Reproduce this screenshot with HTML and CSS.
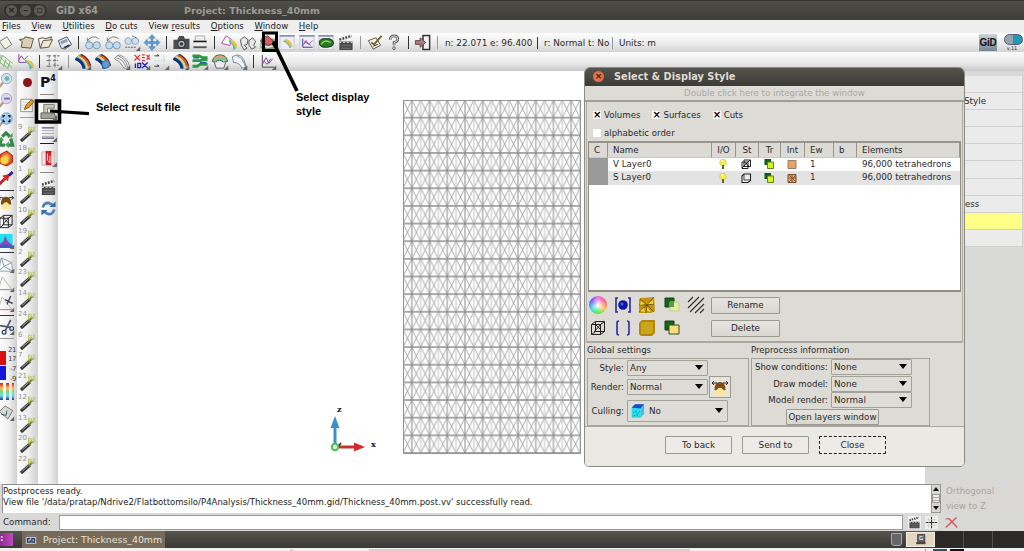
FILE: index.html
```html
<!DOCTYPE html>
<html lang="en">
<head>
<meta charset="utf-8">
<title>GiD x64 - Project: Thickness_40mm</title>
<link rel="stylesheet" href="styles.css">
</head>
<body>
<svg class="defs" width="0" height="0">
  <defs>
    <linearGradient id="rain" x1="0" y1="1" x2="1" y2="0"><stop offset="0" stop-color="#22a"/><stop offset=".4" stop-color="#3bc"/><stop offset=".6" stop-color="#fc3"/><stop offset="1" stop-color="#c22"/></linearGradient>
    <radialGradient id="ball"><stop offset="0" stop-color="#fe6"/><stop offset="1" stop-color="#c31"/></radialGradient>
  </defs>
  <symbol id="corner" viewBox="0 0 18 18"><path d="M18 13v5h-5z" fill="#666"/></symbol>
  <symbol id="new" viewBox="0 0 18 18"><path d="M2 8l8-5 5 8-7 5z" fill="#f3f3ea" stroke="#777766"/></symbol>
  <symbol id="open" viewBox="0 0 18 18"><path d="M2 6l5-1 1-2 9 2-3 10-10-1 1-6z" fill="#d8d0b4" stroke="#56503c"/></symbol>
  <symbol id="open2" viewBox="0 0 18 18"><path d="M2 5l5-1 2 1 7-2-1 3M4 15L2 5m2 10l3-8 10-1-4 8z" fill="#efe8d0" stroke="#56503c"/></symbol>
  <symbol id="save" viewBox="0 0 18 18"><path d="M2 7l9-4 5 8-7 5-4-1z" fill="#e8ecf0" stroke="#4c5158"/><path d="M4 8l7-3 1 3-7 3z" fill="#88a0b8"/><path d="M7 14l6-3 2 1-6 3z" fill="#333"/></symbol>
  <symbol id="glass" viewBox="0 0 18 18"><path d="M3 7q6-7 12-2" fill="none" stroke="#777"/><path d="M3 4v3.500h3" fill="none" stroke="#777"/><circle cx="5" cy="12" r="3.800" fill="#c3dbee" stroke="#7a98b5"/><circle cx="13" cy="12" r="3.800" fill="#c3dbee" stroke="#7a98b5"/></symbol>
  <symbol id="glass3" viewBox="0 0 18 18"><circle cx="5" cy="7.500" r="3.600" fill="#cfe1ee" stroke="#8aa6bc"/><circle cx="12.500" cy="7.500" r="3.600" fill="#cfe1ee" stroke="#8aa6bc"/><path d="M2 14h12M9 2l5 2" stroke="#555" stroke-dasharray="2 1"/><use href="#corner"/></symbol>
  <symbol id="move" viewBox="0 0 18 18"><path d="M9 .5l3.500 4H10V8h4V5.500L17.500 9 14 12.500V10h-4v3.500h2.500L9 17.500l-3.500-4H8V10H4v2.500L.5 9 4 5.500V8h4V4.500H5.500z" fill="#5d9bd2" stroke="#3c78b4" stroke-width=".5"/></symbol>
  <symbol id="camera" viewBox="0 0 18 18"><path d="M1 6h4l2-4h5l1 3h5v11H1z" fill="#4a4c4f"/><circle cx="9.500" cy="10.500" r="4" fill="#aab4bd" stroke="#222"/><circle cx="9.500" cy="10.500" r="1.800" fill="#334"/></symbol>
  <symbol id="print" viewBox="0 0 18 18"><path d="M4 7V2h10v5" fill="#eee" stroke="#aaa"/><path d="M2 8h14" stroke="#222" stroke-width="2"/><path d="M3 9h12v3H3z" fill="#eee"/><path d="M2 14h14" stroke="#555" stroke-width="2"/></symbol>
  <symbol id="band" viewBox="0 0 18 18"><path d="M1 6Q4 1 8 1q8 5 9 12-2 4-7 4Q8 9 1 6z" fill="#54b8cc"/><path d="M1 6Q9 9 10 16.500" fill="none" stroke="#12307f" stroke-width="3"/><path d="M4 3.500Q12 7 13.500 16" fill="none" stroke="#e8d86c" stroke-width="2"/><path d="M5.500 2.500Q14 6 15.500 14.500" fill="none" stroke="#e35d22" stroke-width="1.800"/><path d="M7 1.500q8 4 10 12" fill="none" stroke="#812020" stroke-width="1.400"/></symbol>
  <symbol id="select" viewBox="0 0 18 18"><path d="M1 10l5-8 6 4-2 6z" fill="#fff" stroke="#b4a"/><path d="M9 5q8 2 9 9l-4 3Q13 9 9 9z" fill="url(#rain)"/></symbol>
  <symbol id="shoes" viewBox="0 0 18 18"><path d="M1 6l4-3 4 3-1 5-3 1 3 3-3 2-3-5zM10 7l4-3 3 4-2 4 2 2-4 2-3-4z" fill="#e9e9e9" stroke="#555"/></symbol>
  <symbol id="layers" viewBox="0 0 18 18"><path d="M1 10l5-6 10 1 1 10-8 2-8-2z" fill="#72a078"/><path d="M1 8q1-5 8-6l7 7-6 3z" fill="#d9615d" stroke="#833"/><path d="M2 12l7 2 7-2" fill="none" stroke="#eee" stroke-width="1.500"/></symbol>
  <symbol id="window" viewBox="0 0 18 18"><path d="M1.500 1.500h15v15h-15z" fill="#eceef4" stroke="#c3c7d4"/><path d="M1 1h16v2H1z" fill="#8793b4"/></symbol>
  <symbol id="winband" viewBox="0 0 18 18"><use href="#window"/><path d="M5 8l3-3q6 3 7 8l-3 2q-2-5-7-7z" fill="url(#rain)"/></symbol>
  <symbol id="wingraph" viewBox="0 0 18 18"><use href="#window"/><path d="M4.500 5v9H15" fill="none" stroke="#338"/><path d="M5 12l3-5 3 4 4-4M6 8l7 4" fill="none" stroke="#a4a"/></symbol>
  <symbol id="wineye" viewBox="0 0 18 18"><use href="#window"/><path d="M2 9q0-4 5-4h6q4 1 4 5-1 4-6 4H7q-5 0-5-5z" fill="#2c7a20" stroke="#132"/><path d="M4 11q3-6 10-2" fill="none" stroke="#9d5" stroke-width="1.500"/></symbol>
  <symbol id="clap" viewBox="0 0 18 18"><path d="M2 8h14v9H2z" fill="#4a4a4c"/><path d="M2 6l13-4" stroke="#444" stroke-width="2.600" stroke-dasharray="2 1.300"/><path d="M2 9h14" stroke="#ddd" stroke-dasharray="2 2"/><path d="M4 12h10M4 15h10" stroke="#777"/></symbol>
  <symbol id="note" viewBox="0 0 18 18"><path d="M2 7l8-3 5 8-8 4z" fill="#f4f1e5" stroke="#555"/><path d="M5 9l3 2 8-9" fill="none" stroke="#763" stroke-width="2"/><path d="M7 13l5-2" stroke="#333"/></symbol>
  <symbol id="help" viewBox="0 0 18 18"><path d="M5 6q0-4 4-4t4 3.500Q13 8 9 9v3" fill="none" stroke="#555" stroke-width="2.800"/><path d="M5 6q0-4 4-4t4 3.500Q13 8 9 9v3" fill="none" stroke="#eee"/><circle cx="9" cy="15" r="1.400" fill="#eee" stroke="#555"/></symbol>
  <symbol id="exit" viewBox="0 0 18 18"><path d="M9 1.500h7v15H9z" fill="#f5f5f5" stroke="#333" stroke-width="1.600"/><path d="M1 7h5V4l6 5-6 5v-3H1z" fill="#a97f7f" stroke="#644"/></symbol>
  <symbol id="mesh" viewBox="0 0 18 18"><path d="M1 3l14 12M1 9l10 7M1 15L5 3M6 15l3-8M11 16l2-6M1 3h5l10 8" fill="none" stroke="#7db56a"/></symbol>
  <symbol id="graphband" viewBox="0 0 18 18"><path d="M1.500 1v9H12M1 8l3-5 3 4 4-4" fill="none" stroke="#84a"/><path d="M8 7q8 0 10 8l-5 2q0-6-5-7z" fill="url(#rain)"/></symbol>
  <symbol id="ranges" viewBox="0 0 18 18"><path d="M4 2v13M10 2v13M1 3h5M1 8h5M1 14h5M8 3h7M8 8h5M8 13h6" stroke="#666" stroke-dasharray="3 1"/><use href="#corner"/></symbol>
  <symbol id="bandc" viewBox="0 0 18 18"><use href="#band"/><use href="#corner"/></symbol>
  <symbol id="bandb" viewBox="0 0 18 18"><use href="#band"/><circle cx="12" cy="12" r="4" fill="#5b9dd0" stroke="#37a"/></symbol>
  <symbol id="lines" viewBox="0 0 18 18"><path d="M1 6Q3 2 7 2q8 4 10 12-3 3-6 2Q8 9 1 6zM3 5q8 2 10 10M5 3q8 3 10 12" fill="#f2f2f2" stroke="#888"/><use href="#corner"/></symbol>
  <symbol id="minmax" viewBox="0 0 18 18"><path d="M1 2l6 6M7 2L1 8M9 2h3M9 5h3M9 8h3M14 2l3 5M17 2l-3 5" stroke="#d33" stroke-width="1.300"/><path d="M9 10l6 6M15 10l-6 6M2 11v5M4.500 11h3v4.500h-3z" fill="none" stroke="#22b" stroke-width="1.400"/><use href="#corner"/></symbol>
  <symbol id="vectors" viewBox="0 0 18 18"><path d="M2 3h5l-2-1.500M2 14h5l-2-1.500" fill="none" stroke="#333"/><path d="M12 3v12M3 8h12" stroke="#9cb" stroke-dasharray="1 2"/><use href="#corner"/></symbol>
  <symbol id="stream" viewBox="0 0 18 18"><path d="M1 3h7l4 2h5M1 8h8l3-1h5M1 14h5l3-2h8" fill="none" stroke="#2b9a42" stroke-width="3"/><path d="M2 5h6M9 10h7" stroke="#26a" stroke-width="1.500"/><use href="#corner"/></symbol>
  <symbol id="arch" viewBox="0 0 18 18"><path d="M1 9q1-7 8-7t8 7l-4 1q-5-5-9 0z" fill="#80c99a" stroke="#354"/><path d="M3 10l2 6h8l2-6" fill="#e8eef0" stroke="#656"/><path d="M3 6q6-5 12 0" fill="none" stroke="#e96" stroke-width="1.500"/><use href="#corner"/></symbol>
  <symbol id="shell" viewBox="0 0 18 18"><path d="M2 4q8-5 12 3l3 8-5 1q-2-6-9-6zM7 3q6 2 9 12" fill="#edf5fa" stroke="#789"/><use href="#corner"/></symbol>
  <symbol id="graph" viewBox="0 0 18 18"><path d="M3 2v13h13" fill="none" stroke="#444"/><path d="M3 12l4-7 3 6 4-5M4 8l4 4 4-6" fill="none" stroke="#84a"/><use href="#corner"/></symbol>
  <symbol id="zoomi" viewBox="0 0 18 18"><path d="M1 17l5-6" stroke="#b98" stroke-width="2.500"/><circle cx="9.500" cy="7" r="5.500" fill="#cfe3ee" stroke="#8cabc0"/><circle cx="10" cy="7" r="2.500" fill="#6fb4aa"/></symbol>
  <symbol id="zoomv" viewBox="0 0 18 18"><path d="M1 17l5-6" stroke="#b98" stroke-width="2.500"/><circle cx="9.500" cy="7" r="5.500" fill="#dcd9ee" stroke="#a3a0c0"/><path d="M7 7h6" stroke="#86a" stroke-width="2"/></symbol>
  <symbol id="zoomf" viewBox="0 0 18 18"><path d="M1 17l5-6" stroke="#b98" stroke-width="2.500"/><circle cx="9.500" cy="8" r="6" fill="#a9d2ee" stroke="#6f9cc0"/><path d="M6 7V5h2M11 5h2v2M13 9v2h-2M8 11H6V9" fill="none" stroke="#136" stroke-width="1.600"/></symbol>
  <symbol id="recycle" viewBox="0 0 18 18"><path d="M5 6l4-4 4 4M14 8l2 7h-5M8 15H2l2-6" fill="none" stroke="#328747" stroke-width="3.400"/><path d="M11 7h5V2zM12 11v7l-4-3.500zM1 10h6L4 6z" fill="#4b9d5c"/></symbol>
  <symbol id="sphere" viewBox="0 0 18 18"><path d="M2 5l8-4 6 5v7l-6 4-8-3z" fill="url(#ball)" stroke="#b21"/><circle cx="7" cy="11" r="4" fill="#f5d645"/></symbol>
  <symbol id="arrow" viewBox="0 0 18 18"><path d="M1 16l7-7" stroke="#b22" stroke-width="3"/><path d="M5 6l8-2-2 8z" fill="#d22"/><path d="M12 6l4-4" stroke="#228" stroke-width="3"/></symbol>
  <symbol id="lamp" viewBox="0 0 18 18"><path d="M6 10h6l3 7H3z" fill="#ffe7a0"/><path d="M3.500 12q0-8 5.500-8t5.500 8q-1.500 1-3-1-2.500-2.500-5 0-1.500 2-3 1z" fill="#824c0c"/><path d="M1 5h5M1 5l2-2M1 5l2 2M17 5h-5M17 5l-2-2M17 5l-2 2" stroke="#222" fill="none"/></symbol>
  <symbol id="cubex" viewBox="0 0 18 18"><path d="M2.500 5.500h9v10h-9zM6.500 2.500h9v10h-9zM2.500 5.500l4-3M11.500 5.500l4-3M2.500 15.500l4-3M11.500 15.500l4-3M5 13l8-9M6 5l6 6" fill="none" stroke="#222"/></symbol>
  <symbol id="cull" viewBox="0 0 18 18"><path d="M2 5l4-4h11l-4 5v11H2z" fill="#25dff0"/><path d="M2 5l4-4h11l-4 5z" fill="#2549cc"/><path d="M13 6l4-5v11l-4 5z" fill="#53b9d8"/><path d="M4 11l3-2 2 4 3-4M3 15l5-1 3 2" stroke="#17716e" fill="none" stroke-dasharray="1 1"/></symbol>
  <symbol id="cullm" viewBox="0 0 18 18"><path d="M1 2h15v14H1z" fill="#24e0ee"/><path d="M1 14l5-4 2-6 3 6 5 4v3H1z" fill="#8a4bb8"/><path d="M1 15l7-2 8 2v2H1z" fill="#2d61c8"/><use href="#corner"/></symbol>
  <symbol id="tetra" viewBox="0 0 18 18"><path d="M4 2l11 5 1 9H1zM4 2l3 9 9 5M15 7l-8 4-6 5" fill="#f5f7fa" stroke="#8b9bb5"/><use href="#corner"/></symbol>
  <symbol id="tri" viewBox="0 0 18 18"><path d="M5 2l10 13M5 2L1 15" fill="none" stroke="#bba"/><path d="M1 15.500h14" stroke="#c66"/><use href="#corner"/></symbol>
  <symbol id="tricut" viewBox="0 0 18 18"><use href="#tri"/><path d="M8 5l8 4M14 1l-4 9" stroke="#446" stroke-width="1.500"/></symbol>
  <symbol id="scissors" viewBox="0 0 18 18"><path d="M2 8l12 2M14 2L8 14" stroke="#556" stroke-width="1.800"/><circle cx="15" cy="11" r="2" fill="none" stroke="#246" stroke-width="1.300"/><circle cx="7" cy="15" r="2" fill="none" stroke="#246" stroke-width="1.300"/><use href="#corner"/></symbol>
  <symbol id="tag" viewBox="0 0 18 18"><path d="M2 8l6-6 8 5-5 9z" fill="#d5d9cf" stroke="#777"/><path d="M4 11l5 1 1-5" fill="none" stroke="#356"/><use href="#corner"/></symbol>
  <symbol id="wand" viewBox="0 0 18 18"><path d="M1.500 17L11 8.500" stroke="#383838" stroke-width="3.400"/><path d="M3 15l7-6.500" stroke="#aaa"/><path d="M9.500 9.500l4-4" stroke="#6d7733" stroke-width="2.500"/><path d="M9 3h7.500M9 6h8M10 1.500v7M15.500 1.500v6" stroke="#c3c862" stroke-width="1.800" stroke-dasharray="1.500 1"/></symbol>
  <symbol id="pencil" viewBox="0 0 18 18"><path d="M2 2.500h13v14H2z" fill="#f7f6ee" stroke="#888"/><path d="M4 6h9M4 9h9M4 12h9" stroke="#ccc"/><path d="M6 14l2-5 6-6 3 2-6 7z" fill="#e2952b" stroke="#8a5317"/></symbol>
  <symbol id="folder" viewBox="0 0 18 18"><path d="M4 1.500h11v4H8v6H4z" fill="#c6cabb" stroke="#74786a"/><path d="M1 10.500h14l2 6H1z" fill="#9fa595" stroke="#5d6155"/><use href="#corner"/></symbol>
  <symbol id="sheet" viewBox="0 0 18 18"><path d="M2 3h13M2 14h13" stroke="#557" stroke-width="1.300"/><path d="M2 6h13M2 9h13M2 12h13" stroke="#a5a8b5"/><use href="#corner"/></symbol>
  <symbol id="spiral" viewBox="0 0 18 18"><path d="M2 2h13v14H2z" fill="#f0e2e2" stroke="#c9b0b0"/><path d="M6 1h6v15H6z" fill="#cc2229"/><path d="M8 4v7l2.500 2.500V6" stroke="#fff" fill="none"/><use href="#corner"/></symbol>
  <symbol id="refresh" viewBox="0 0 18 18"><path d="M3 8q1-5 6-5l4 2M15 10q-1 5-6 5l-4-2" fill="none" stroke="#4a80b4" stroke-width="2.800"/><path d="M10 7.500h6.500V1.500zM8 10.500H1.500v6z" fill="#356a9f"/></symbol>
  <symbol id="bulb" viewBox="0 0 12 12"><circle cx="6" cy="4.500" r="3.300" fill="#f3ef4f" stroke="#c3bd50" stroke-width=".6"/><path d="M5 7h2v4H5z" fill="#676127"/><path d="M4 3h2" stroke="#fff"/></symbol>
  <symbol id="boxx" viewBox="0 0 12 12"><path d="M2 4h6v6.500H2zM4 2h6.500v6.500H4zM2 10l8-8M4 4l5 4" fill="none" stroke="#222"/></symbol>
  <symbol id="box" viewBox="0 0 12 12"><path d="M4 2h6.500v6.500L8 10.500H2V4z" fill="#eee" stroke="#222" stroke-width="1.100"/><path d="M4 2.500V8h6" fill="none" stroke="#444"/></symbol>
  <symbol id="trans" viewBox="0 0 12 12"><path d="M1.500 1H8v6H1.500z" fill="#0c5c16"/><path d="M4.500 4h6v6.500h-6z" fill="#dced2e" stroke="#5a8a14"/></symbol>
  <symbol id="swatch" viewBox="0 0 12 12"><path d="M2 2.500h8V10.500H2z" fill="#e5a468" stroke="#9d7f60"/></symbol>
  <symbol id="swatchx" viewBox="0 0 12 12"><path d="M2 2.500h8V10.500H2z" fill="#e5a468" stroke="#7a4e2c"/><path d="M3 6h7M6 3v7M3 3l7 7M10 3l-7 7" stroke="#7a4e2c" stroke-width=".8"/></symbol>
  <symbol id="dot" viewBox="0 0 18 18"><path d="M4 2H2v14h2M14 2h2v14h-2" fill="none" stroke="#2427a8" stroke-width="1.600"/><circle cx="9" cy="9" r="4.800" fill="#1215a5"/><circle cx="8" cy="8" r="1.500" fill="#4468d4"/></symbol>
  <symbol id="brackets" viewBox="0 0 18 18"><path d="M5 2q-2 0-2 2v10q0 2 2 2M13 2q2 0 2 2v10q0 2-2 2" fill="none" stroke="#2b2ba8" stroke-width="1.600"/></symbol>
  <symbol id="facets" viewBox="0 0 18 18"><path d="M2 2l14-1 1 14-4 2H1V4z" fill="#c29510"/><path d="M2 3l7 6 7-8M1 16l8-7 7 7M1 9h8M9 9l7-1M9 9l-1 8" stroke="#5e4505" stroke-width=".7" fill="none"/><path d="M10 8l5-4v4zM3 5l4 3-5 1zM9 11l4 5-4-1zM2 15l4-3 1 4z" fill="#f4cf37"/></symbol>
  <symbol id="smooth" viewBox="0 0 18 18"><path d="M4 1h13v13l-3 3H3l-2-2V4z" fill="#b0860c"/><path d="M4 3h11v10l-2 2H3V5z" fill="#cda51b"/></symbol>
  <symbol id="transp" viewBox="0 0 18 18"><path d="M2 2h9v9H2z" fill="#18631c" stroke="#123f12"/><path d="M7 6h9v9H7z" fill="#e8eca2" stroke="#bfcf8f"/><path d="M7 6h4v5H7z" fill="#5b9b4c"/></symbol>
  <symbol id="opaque" viewBox="0 0 18 18"><path d="M2 2h9v9H2z" fill="#18631c" stroke="#123f12"/><path d="M6 6h10v9H6z" fill="#f4df7a" stroke="#3d4c17"/></symbol>
  <symbol id="hatch" viewBox="0 0 18 18"><path d="M1 6l5-5M1 12L12 1M3 16L17 2M8 17l9-9M13 17l4-4" stroke="#333" stroke-width="1.200"/></symbol>
</svg>

<div class="screen">
  <header class="titlebar">
    <div class="winbtns"><i>×</i><i>–</i><i>▫</i></div>
    <span class="app">GiD x64</span>
    <span class="proj">Project: Thickness_40mm</span>
  </header>
  <nav class="menu">
    <span><u>F</u>iles</span><span><u>V</u>iew</span><span><u>U</u>tilities</span><span><u>D</u>o cuts</span><span>View <u>r</u>esults</span><span><u>O</u>ptions</span><span><u>W</u>indow</span><span><u>H</u>elp</span>
  </nav>
  <div class="toolbar first">
    <svg><use href="#new"/></svg><svg><use href="#open"/></svg><svg><use href="#open2"/></svg><svg><use href="#save"/></svg><b class="sep"></b>
    <svg><use href="#glass"/></svg><svg><use href="#glass"/></svg><svg><use href="#glass3"/></svg><svg><use href="#move"/></svg><b class="sep"></b>
    <svg><use href="#camera"/></svg><svg><use href="#print"/></svg><b class="sep"></b>
    <svg><use href="#select"/></svg><svg><use href="#shoes"/></svg><svg><use href="#layers"/></svg><svg><use href="#winband"/></svg><svg><use href="#wingraph"/></svg><svg><use href="#wineye"/></svg><svg><use href="#clap"/></svg><b class="sep grey"></b>
    <svg><use href="#note"/></svg><svg><use href="#help"/></svg><b class="sep"></b><svg><use href="#exit"/></svg><b class="sep grey"></b>
    <span class="stat s1">n: 22.071 e: 96.400</span><span class="stat s2">r: Normal t: No</span><span class="stat s3">Units: m</span>
    <span class="gid">GiD</span>
    <span class="ver"><i></i>v.11</span>
  </div>
  <div class="toolbar second">
    <svg><use href="#mesh"/></svg><svg><use href="#graphband"/></svg><b class="sep"></b><svg><use href="#ranges"/></svg><b class="sep grey"></b>
    <svg><use href="#bandc"/></svg><svg><use href="#bandb"/></svg><svg><use href="#lines"/></svg><svg><use href="#minmax"/></svg><svg><use href="#vectors"/></svg><svg><use href="#bandc"/></svg><svg><use href="#stream"/></svg><svg><use href="#arch"/></svg><svg><use href="#shell"/></svg><b class="sep"></b><svg><use href="#graph"/></svg>
  </div>

  <main class="work">
    <div class="col cola">
      <svg><use href="#zoomi"/></svg><svg><use href="#zoomv"/></svg><svg><use href="#zoomf"/></svg><svg><use href="#recycle"/></svg><svg><use href="#sphere"/></svg><svg><use href="#arrow"/></svg><b class="rule"></b>
      <svg><use href="#lamp"/></svg><svg><use href="#cubex"/></svg><svg><use href="#cullm"/></svg><b class="rule"></b>
      <svg><use href="#tetra"/></svg><svg><use href="#tri"/></svg><svg><use href="#tricut"/></svg><b class="rule"></b>
      <svg><use href="#scissors"/></svg><b class="rule grey"></b>
      <div class="legend"><div class="chips"><i class="red"></i><i class="blue"></i></div><div class="nums"><span>21</span><span>17</span><span>-7</span><span>-9</span></div></div>
      <div class="strips"><i></i><i></i><i></i></div>
      <svg class="tagicon"><use href="#tag"/></svg>
    </div>
    <div class="col colb">
      <i class="rec"></i><svg class="pen"><use href="#pencil"/></svg><b class="rule grey"></b>
      <div class="wand"><span>9</span><svg><use href="#wand"/></svg></div>
      <div class="wand"><span>18</span><svg><use href="#wand"/></svg></div>
      <div class="wand"><span>1</span><svg><use href="#wand"/></svg></div>
      <div class="wand"><span>11</span><svg><use href="#wand"/></svg></div>
      <div class="wand"><span>10</span><svg><use href="#wand"/></svg></div>
      <div class="wand"><span>19</span><svg><use href="#wand"/></svg></div>
      <div class="wand"><span>2</span><svg><use href="#wand"/></svg></div>
      <div class="wand"><span>23</span><svg><use href="#wand"/></svg></div>
      <div class="wand"><span>14</span><svg><use href="#wand"/></svg></div>
      <div class="wand"><span>24</span><svg><use href="#wand"/></svg></div>
      <div class="wand"><span>6</span><svg><use href="#wand"/></svg></div>
      <div class="wand"><span>7</span><svg><use href="#wand"/></svg></div>
      <div class="wand"><span>21</span><svg><use href="#wand"/></svg></div>
      <div class="wand"><span>12</span><svg><use href="#wand"/></svg></div>
      <div class="wand"><span>13</span><svg><use href="#wand"/></svg></div>
      <div class="wand"><span>20</span><svg><use href="#wand"/></svg></div>
      <div class="wand"><span>22</span><svg><use href="#wand"/></svg></div>
    </div>
    <div class="col colc">
      <span class="p4">P<sup>4</sup></span><b class="rule"></b><svg class="fold"><use href="#folder"/></svg><svg><use href="#sheet"/></svg><b class="rule dark"></b><svg class="spi"><use href="#spiral"/></svg><b class="rule"></b><svg class="cl"><use href="#clap"/></svg><svg><use href="#refresh"/></svg>
    </div>
    <div class="canvas">
      <svg class="axes" viewBox="0 0 60 60">
        <text x="10" y="12">z</text><text x="44" y="47">x</text>
        <path d="M8 46V26" stroke="#3d8fc9" stroke-width="3"/><path d="M3.500 28L8 16l4.500 12z" fill="#3a90cc"/>
        <path d="M12 47h16" stroke="#c93030" stroke-width="3"/><path d="M27 42.500L38 47l-11 4.500z" fill="#d42c2c"/>
        <path d="M10 48l4-5" stroke="#222" stroke-width="1.500"/><circle cx="8" cy="47" r="3.200" fill="#dff0d8" stroke="#4bc04d" stroke-width="2"/>
      </svg>
      <svg class="meshview" width="178" height="354">
        <defs><pattern id="cell" width="17.700" height="17.650" patternUnits="userSpaceOnUse">
          <path d="M0 0l8.850 17.650L17.700 0M0 17.650L8.850 0l8.850 17.650" fill="none" stroke="#8c8c8c" stroke-width=".75"/>
          <path d="M8.850 0v17.650" stroke="#888"/><path d="M0 0v17.650M17.700 0v17.650" stroke="#c4c4c4"/>
          <path d="M0 0h17.700M0 17.650h17.700" stroke="#8c8c8c" stroke-width="1.300"/>
        </pattern></defs>
        <rect x=".5" y=".5" width="177" height="353" fill="url(#cell)" stroke="#929292"/>
      </svg>
    </div>
    <aside class="side">
      <div></div><div>Style</div><div></div><div></div><div></div><div></div><div></div><div>ess</div><div class="hot"></div><div></div>
    </aside>
  </main>

  <section class="bottom">
    <div class="log"><p>Postprocess ready.</p><p class="path">View file '/data/pratap/Ndrive2/Flatbottomsilo/P4Analysis/Thickness_40mm.gid/Thickness_40mm.post.vv' successfully read.</p></div>
    <div class="scroll"><i class="up"></i><b></b><i class="down"></i></div>
    <div class="ortho">Orthogonal<br>view to Z</div>
  </section>
  <section class="command">
    <label>Command:</label><div class="entry"></div>
    <svg class="mini" viewBox="0 0 18 18"><use href="#clap"/></svg>
    <svg class="mini cross" viewBox="0 0 18 18"><path d="M9 1v16M1 9h16" stroke="#333" stroke-width="1.500"/><path d="M5 2v14M13 2v14M2 5h14M2 13h14" stroke="#ccc"/></svg>
    <svg class="mini redx" viewBox="0 0 18 18"><path d="M1 4h5l11 12M1 16L16 2" stroke="#d85a5a" stroke-width="2" fill="none"/></svg>
  </section>
  <footer class="taskbar">
    <i class="launch">:</i>
    <div class="task"><svg viewBox="0 0 14 12"><path d="M1 1h12v10H1z" fill="#bfc7cf"/><path d="M1 1h12v2H1z" fill="#667"/><path d="M6 5H3v4h3V7M8 5h3v4H8z" fill="none" stroke="#233a5c" stroke-width="1.500"/></svg><span>Project: Thickness_40mm</span></div>
    <i class="trash"></i><div class="desk"><svg viewBox="0 0 18 18"><path d="M5 2h10v10H5z" fill="#667" stroke="#333"/><path d="M3 14h13" stroke="#543" stroke-width="3"/><path d="M12 5H8v4h4V7" stroke="#fff" fill="none"/></svg></div><i class="ws"></i><i class="ws"></i><i class="ws"></i>
  </footer>
  <div class="under"><i class="tile"></i><i class="right"><b></b><b class="k"></b></i></div>

  <svg class="marks" viewBox="0 0 1024 551">
    <path d="M263.500 33h13v17.500h-13z" fill="none" stroke="#000" stroke-width="3"/>
    <path d="M274 43.500L297 91" stroke="#000" stroke-width="3.600"/><circle cx="274.500" cy="43.500" r="2.500" fill="#000"/>
    <path d="M36.500 101h23v21h-23z" fill="none" stroke="#000" stroke-width="3.600"/>
    <path d="M50 111l39 2.700" stroke="#000" stroke-width="3.200"/>
  </svg>
  <div class="callout result">Select result file</div>
  <div class="callout display">Select display<br>style</div>

  <section class="dialog">
    <header class="dtitle"><i>×</i><span>Select &amp; Display Style</span></header>
    <div class="integrate">Double click here to integrate the window</div>
    <div class="dbody">
      <div class="checks"><label><i>×</i>Volumes</label><label><i>×</i>Surfaces</label><label><i>×</i>Cuts</label></div>
      <div class="checks alpha"><label><i></i>alphabetic order</label></div>
      <div class="table">
        <div class="row head"><span>C</span><span>Name</span><span>I/O</span><span>St</span><span>Tr</span><span>Int</span><span>Ew</span><span>b</span><span>Elements</span></div>
        <div class="row"><span></span><span>V Layer0</span><span><svg><use href="#bulb"/></svg></span><span><svg><use href="#boxx"/></svg></span><span><svg><use href="#trans"/></svg></span><span><svg><use href="#swatch"/></svg></span><span>1</span><span></span><span>96,000 tetrahedrons</span></div>
        <div class="row alt"><span></span><span>S Layer0</span><span><svg><use href="#bulb"/></svg></span><span><svg><use href="#box"/></svg></span><span><svg><use href="#trans"/></svg></span><span><svg><use href="#swatchx"/></svg></span><span>1</span><span></span><span>96,000 tetrahedrons</span></div>
      </div>
      <div class="actions">
        <i class="wheel"></i><svg><use href="#dot"/></svg><svg><use href="#facets"/></svg><svg><use href="#transp"/></svg><svg><use href="#hatch"/></svg><button>Rename</button>
        <svg><use href="#cubex"/></svg><svg><use href="#brackets"/></svg><svg><use href="#smooth"/></svg><svg><use href="#opaque"/></svg><span></span><button>Delete</button>
      </div>
    </div>
    <div class="settings">
      <div class="group global"><h3>Global settings</h3>
        <div class="frame">
          <label>Style:</label><div class="combo">Any</div><span></span>
          <label>Render:</label><div class="combo">Normal</div><div class="lampbtn"><svg><use href="#lamp"/></svg></div>
          <label>Culling:</label><div class="combo wide"><svg><use href="#cull"/></svg>No</div>
        </div>
      </div>
      <div class="group pre"><h3>Preprocess information</h3>
        <div class="frame">
          <label>Show conditions:</label><div class="combo">None</div>
          <label>Draw model:</label><div class="combo">None</div>
          <label>Model render:</label><div class="combo">Normal</div>
          <button>Open layers window</button>
        </div>
      </div>
    </div>
    <footer class="dfoot"><button>To back</button><button>Send to</button><button class="focus">Close</button></footer>
  </section>
</div>
</body>
</html>
```
FILE: styles.css
```css
* { box-sizing: border-box; }
body { margin: 0; font: 8.6px/12px "DejaVu Sans", sans-serif; color: #2a2a2a; }
i { font-style: normal; }
p, h3 { margin: 0; }
svg { display: block; flex: none; }
.defs { position: absolute; }
button { font: inherit; color: inherit; padding: 0; border: 1px solid #9c998f; border-radius: 1px; background: linear-gradient(#e6e4df, #d9d7d0); }
.screen { position: relative; width: 1024px; height: 551px; overflow: hidden; display: flex; flex-direction: column; background: #dcdcda; }

.titlebar { height: 20px; flex: none; display: flex; align-items: center; background: linear-gradient(#504f4a, #3c3b37); border-top: 1px solid #34332f; font-weight: bold; font-size: 9.5px; color: #9c9a92; }
.winbtns { display: flex; gap: 3px; margin-left: 4px; width: 43px; height: 13px; padding: 1px 2px; border-radius: 7px; background: #33322e; }
.winbtns i { width: 11px; height: 11px; border-radius: 50%; background: #5b5a55; color: #24231f; line-height: 10px; text-align: center; }
.app { margin-left: 9px; width: 128px; font-size: 9.6px; }
.menu { height: 13px; flex: none; display: flex; gap: 10.700px; padding-left: 2px; background: #eeeeee; line-height: 13px; color: #222; font-size: 8.550px; }

.toolbar { flex: none; display: flex; align-items: center; padding-left: 0; }
.toolbar.first { height: 19px; background: linear-gradient(#fff, #e9e9e9 60%, #d2d2d2); }
.toolbar.second { height: 19px; background: linear-gradient(#fcfcfc, #e8e8e8 60%, #c8c8c8); }
.toolbar > svg { width: 18px; height: 17px; margin: 0 .75px; }
.toolbar > svg:first-child { margin-left: -3px; }
.sep { flex: none; width: 1px; height: 13px; margin: 0 4.150px; background: #333; }
.sep.grey { background: #999; }
.second .sep { margin: 0 4.200px; }
.stat { font-size: 8.850px; white-space: nowrap; }
.s1 { margin-left: 3px; width: 92px; }
.s2, .s3 { border-left: 1px solid #333; padding-left: 6px; }
.s2 { width: 75px; }
.s3 { border-color: #999; }
.gid { margin-left: auto; width: 18px; height: 17px; background: linear-gradient(#cdd3da, #758595); color: #111; font: bold 10px/17px "Liberation Sans", sans-serif; text-align: center; letter-spacing: -.3px; }
.ver { width: 24px; margin-left: 3px; display: flex; flex-direction: column; align-items: center; font-size: 5px; line-height: 6px; }
.ver i { width: 19px; height: 11px; margin-left: 3px; border-radius: 6px; border: 1px solid #557; background: linear-gradient(90deg, #98a4ad 48%, #1c9bb0 50%); }

.work { height: 413px; flex: none; display: flex; background: #fff; }
.col { flex: none; display: flex; flex-direction: column; background: linear-gradient(90deg, #fdfdfd, #f0f0f0 50%, #d0d0d0); overflow: hidden; }
.rule { flex: none; display: block; width: 14px; height: 1px; background: #333; }
.rule.grey { background: #999; }
.cola { width: 17px; }
.cola > svg { width: 18px; height: 17px; margin: 1px 0 1.500px -3px; }
.cola .rule { margin: 1.500px 0; }
.legend { display: flex; height: 36px; margin-top: 5px; }
.chips { padding-top: 5px; }
.chips i { display: block; width: 6px; height: 14px; margin-bottom: 1px; background: #d81010; }
.chips .blue { background: #1414d8; }
.nums { font-size: 7px; width: 10px; text-align: right; letter-spacing: -.5px; color: #444; }
.nums span { display: block; line-height: 9.700px; }
.strips { display: flex; gap: 3px; height: 17px; margin: 1px 0 3px; }
.strips i { width: 2.500px; background: linear-gradient(#c22, #fb5 30%, #7d7 50%, #6de 75%, #23a); }
.strips i:first-child { width: 3px; }
.colb { width: 21px; padding-left: 2px; }
.rec { width: 9px; height: 9px; margin: 7px 0 9px 4px; border-radius: 50%; background: #8c1419; flex: none; }
.colb .pen { width: 16px; height: 18px; }
.colb .rule { margin: 3px 0 5px 1px; }
.wand { position: relative; height: 20.750px; flex: none; }
.wand span { display: block; font: 7px/9px "DejaVu Sans", sans-serif; color: #8d8d99; margin-left: -1px; }
.wand svg { position: absolute; left: 0; top: 2px; width: 18px; height: 17px; }
.colc { width: 20px; padding-left: 2px; background: linear-gradient(90deg, #fff, #eee 60%, #d2d2d2); }
.colc svg { width: 17px; height: 17px; }
.p4 { font: bold 14px/22px "DejaVu Sans", sans-serif; height: 23px; color: #171021; white-space: nowrap; }
.p4 sup { font-size: 8px; line-height: 0; vertical-align: 6px; }
.colc .rule { background: #888; }
.colc .dark { background: #222; }
.colc .fold { margin: 8px 0 5px; }
.colc .dark { margin-top: 1px; }
.colc .spi { margin: 6px 0 5px; }
.colc .cl { margin: 6px 0 4px; }

.canvas { width: 867px; flex: none; display: flex; align-items: flex-start; background: #fff; }
.axes { width: 60px; height: 60px; margin: 329px 0 0 269px; }
.axes text { font: bold 8px "DejaVu Serif", serif; fill: #111; }
.meshview { margin: 29px 0 0 16px; }
.side { flex: 1; padding: 5px 1px 0 0; background: #d9d9d8; }
.side div { height: 17.100px; padding-left: 40px; border: 1px solid #d0d0d0; border-width: 0 1px 1px 0; background: #ebebeb; line-height: 16px; }
.side div:nth-child(2) { padding-left: 39px; font-size: 8.800px; }
.side .hot { background: #ffff87; }

.bottom { height: 29px; flex: none; display: flex; background: #d9d8d5; }
.log { width: 929px; margin-left: 2px; padding: 1px 0 0; border: 1px solid #8f8f8f; border-width: 1px 0 0 1px; background: #fff; font-size: 8.570px; line-height: 11.300px; color: #222; white-space: nowrap; }
.scroll { width: 10px; display: flex; flex-direction: column; align-items: center; justify-content: space-between; border: 1px solid #999; background: #d8d6d0; padding: 2px 0; }
.scroll b { width: 8px; height: 9px; border: 1px solid #999; background: repeating-linear-gradient(#eee 0 2px, #a9a597 2px 3px); }
.up { border: 3px solid transparent; border-top: 0; border-bottom: 4px solid #111; }
.down { border: 3px solid transparent; border-bottom: 0; border-top: 4px solid #111; }
.ortho { padding-left: 5px; color: #a7a5a0; line-height: 15px; font-size: 8.600px; height: 29px; overflow: visible; white-space: nowrap; }
.command { height: 18px; flex: none; display: flex; align-items: center; background: #d9d9d8; padding-left: 3px; }
.command label { width: 56px; font-size: 8.700px; }
.entry { width: 844px; height: 15px; background: #fff; border: 1px solid #999; }
.mini { width: 13px; height: 13px; margin-left: 5px; background: #eee; }
.mini.cross { margin-left: 4px; }
.mini.redx { background: none; margin-left: 7px; }
.taskbar { height: 17px; flex: none; display: flex; align-items: center; background: linear-gradient(#55544e, #3a3935); color: #e6e2d8; }
.launch { width: 13px; height: 13px; background: linear-gradient(90deg, #8d2b8c, #c04cbf); line-height: 10px; font-weight: bold; }
.task { width: 143px; height: 17px; margin-left: 9px; padding-left: 3px; display: flex; align-items: center; gap: 6px; background: #786a58; font-size: 9.350px; white-space: nowrap; }
.task svg { width: 12px; height: 11px; }
.trash { width: 11px; height: 13px; margin-left: 726px; border: 1.500px solid #aaa; border-radius: 1px 1px 3px 3px; background: #666; }
.desk { width: 29px; height: 15px; margin-left: 4px; background: #e5d6c3; border: 1px solid #f3ece0; display: flex; justify-content: center; }
.desk svg { width: 13px; height: 13px; }
.ws { width: 29px; height: 17px; background: #2b2a28; border-right: 1px solid #55534d; }
.ws:last-child { flex: 1; border: 0; }
.under { height: 3px; display: flex; justify-content: space-between; background: #f2f2f2; padding-top: 1px; }
.tile { margin-left: 290px; width: 400px; background: #d4d0cc; }
.tile::before { content: ""; display: block; width: 76px; height: 2px; background: #f2f2f2; margin-left: 3px; }
.right { width: 99px; border-left: 1px solid #999; display: flex; gap: 3px; padding-left: 7px; }
.right b { width: 14px; background: #2b5560; }
.right .k { background: #111; }

.marks { position: absolute; inset: 0; width: 1024px; height: 551px; }
.callout { position: absolute; font: bold 11px/14px "Liberation Sans", sans-serif; color: #000; white-space: nowrap; }
.result { left: 96px; top: 100px; }
.display { left: 296px; top: 90px; }

.dialog { position: absolute; left: 584px; top: 67px; width: 381px; height: 400px; display: flex; flex-direction: column; border: 1px solid #8d8b81; border-radius: 6px 6px 5px 5px; background: #dcdbd6; overflow: hidden; }
.dtitle { height: 19px; margin: -1px -1px 0; flex: none; display: flex; align-items: center; background: linear-gradient(#55544e, #3c3b37); color: #dfdbd2; font-weight: bold; font-size: 9.800px; }
.dtitle i { width: 11px; height: 11px; margin: 0 10px 0 9px; border-radius: 50%; background: #e2714a; color: #50200e; line-height: 10px; text-align: center; font-size: 9px; }
.integrate { height: 16px; flex: none; line-height: 15px; text-align: center; color: #aaa8a3; font-size: 8.650px; border-bottom: 2px solid #a09e94; }
.dbody { height: 241px; flex: none; margin: 0 1px; border: 1px solid #b0aea5; border-top: 0; border-bottom: 2px solid #aaa89f; padding: 6px 1px 0; }
.checks { display: flex; gap: 12px; height: 14px; padding-left: 5px; align-items: center; font-size: 8.600px; }
.checks label { display: flex; gap: 3px; align-items: center; }
.checks i { width: 8px; height: 8px; background: #fff; line-height: 8px; font-size: 10px; font-weight: bold; text-align: center; color: #000; }
.checks.alpha { margin-top: 4px; }
.table { height: 151px; margin-top: 1px; background: #fff; border: 1px solid #8f8d84; border-top: 2px solid #98968c; border-bottom-width: 2px; }
.row { display: grid; grid-template-columns: 19px 104px 24px 23px 22px 24px 29px 23px 1fr; height: 13.500px; line-height: 13px; font-size: 8.700px; }
.row span { padding-left: 5px; white-space: nowrap; }
.row span:nth-child(n+3):nth-child(-n+6) { padding-left: 0; display: flex; justify-content: center; align-items: center; }
.row span:nth-child(7), .row span:nth-child(9) { padding-left: 5px; }
.row svg { width: 12px; height: 12px; margin-left: -3px; }
.row:not(.head) span:first-child { background: #999; }
.alt { background: #e3e3e3; }
.head { height: 14.500px; line-height: 14px; background: #dcdad5; border-bottom: 1px solid #c9c7c0; }
.head span { border-right: 1px solid #98968c; }
.actions { display: grid; grid-template-columns: 20px 20px 20px 20px 20px 69px; gap: 5px 4.500px; padding: 4px 0 0 1px; align-items: center; justify-content: start; }
.actions svg, .wheel { width: 18px; height: 18px; }
.wheel { border-radius: 50%; background: radial-gradient(#fff, transparent 65%), conic-gradient(#e6d, #f57, #fb4, #4e4, #3dd, #55f, #e6d); }
.actions button { height: 17px; width: 69px; margin-left: -.5px; font-size: 8.900px; }
.settings { height: 84px; flex: none; display: flex; border-bottom: 1px solid #a9a79e; }
h3 { font: inherit; font-size: 8.550px; height: 15px; line-height: 14px; padding-left: 2px; }
.global { width: 164px; }
.pre { width: 181px; }
.frame { height: 68px; border: 1px solid #a5a39a; margin-left: 2px; display: grid; align-items: center; }
.frame label { text-align: right; padding-right: 3px; white-space: nowrap; }
.global .frame { grid-template-columns: 39px 81px 22px; grid-template-rows: 17px 22px 26px; }
.combo { position: relative; height: 16px; border: 1px solid #a3a198; border-radius: 1px; padding-left: 2px; background: #dedcd7; line-height: 14px; font-size: 8.800px; }
.combo::after { content: ""; position: absolute; right: 4px; top: calc(50% - 3px); border: 4px solid transparent; border-top: 5px solid #000; border-bottom: 0; }
.wide { grid-column: span 2; width: 101px; height: 22px; display: flex; align-items: center; gap: 4px; }
.wide svg { width: 15px; height: 16px; }
.lampbtn { width: 22px; height: 22px; margin-left: 1px; display: grid; place-items: center; border: 1px solid #9c998f; background: #e6e4df; }
.lampbtn svg { width: 18px; height: 18px; }
.pre .frame { grid-template-columns: 79px 81px; grid-template-rows: 16.500px 16.500px 16.500px 16.500px; align-content: start; }
.pre button { grid-column: span 2; justify-self: start; margin-left: 34px; width: 93px; height: 16px; font-size: 8.700px; white-space: nowrap; }
.dfoot { flex: 1; display: flex; gap: 10px; padding: 9px 0 0 80px; background: #eae9e4; }
.dfoot button { width: 67px; height: 18px; background: #edebe7; font-size: 8.800px; }
.dfoot .focus { border: 1px dashed #222; }
```
